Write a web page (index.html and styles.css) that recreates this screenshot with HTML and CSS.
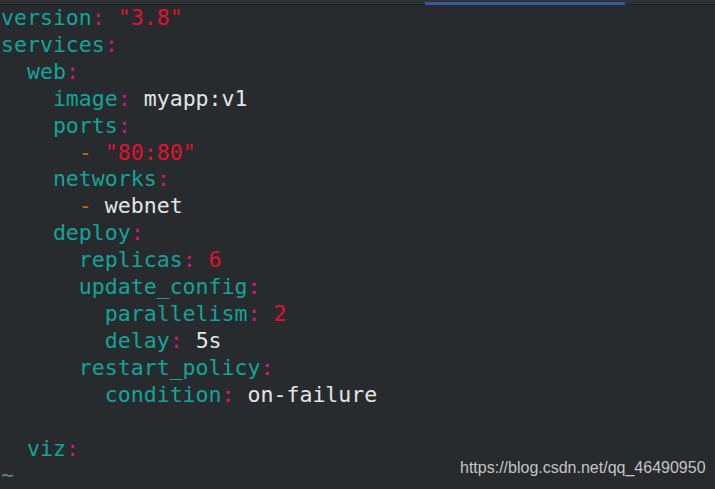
FILE: index.html
```html
<!DOCTYPE html>
<html>
<head>
<meta charset="utf-8">
<link rel="stylesheet" href="styles.css">
</head>
<body>
<div class="tabbar"><div class="tab-active"></div></div>
<pre class="code"><span class="k">version</span><span class="c">:</span> <span class="s">"3.8"</span>
<span class="k">services</span><span class="c">:</span>
  <span class="k">web</span><span class="c">:</span>
    <span class="k">image</span><span class="c">:</span> <span class="v">myapp:v1</span>
    <span class="k">ports</span><span class="c">:</span>
      <span class="d">-</span> <span class="s">"80:80"</span>
    <span class="k">networks</span><span class="c">:</span>
      <span class="d">-</span> <span class="v">webnet</span>
    <span class="k">deploy</span><span class="c">:</span>
      <span class="k">replicas</span><span class="c">:</span> <span class="s">6</span>
      <span class="k">update_config</span><span class="c">:</span>
        <span class="k">parallelism</span><span class="c">:</span> <span class="s">2</span>
        <span class="k">delay</span><span class="c">:</span> <span class="v">5s</span>
      <span class="k">restart_policy</span><span class="c">:</span>
        <span class="k">condition</span><span class="c">:</span> <span class="v">on-failure</span>

  <span class="k">viz</span><span class="c">:</span>
<span class="t">~</span></pre>
<div class="watermark">https://blog.csdn.net/qq_46490950</div>
</body>
</html>
```
FILE: styles.css
```css
html, body {
  margin: 0;
  padding: 0;
  width: 715px;
  height: 489px;
  overflow: hidden;
  background: #272b2e;
}
body {
  position: relative;
}
.tabbar {
  height: 4px;
  background: #2e3235;
  border-bottom: 1px solid #1f2224;
  position: relative;
}
.tab-active {
  position: absolute;
  left: 425px;
  top: 2px;
  width: 200px;
  height: 3px;
  background: #3a55a5;
}
.code {
  margin: 0;
  padding: 0 0 0 1px;
  font-family: "DejaVu Sans Mono", monospace;
  font-size: 21.55px;
  line-height: 26.9px;
  color: #e6e6e6;
}
.k { color: #14a399; }
.c { color: #d6157c; }
.s { color: #e3112f; }
.d { color: #c76a0c; }
.v { color: #e4e4e4; }
.t { color: #6d8080; }
.watermark {
  position: absolute;
  left: 460px;
  top: 459px;
  font-family: "Liberation Sans", Arial, sans-serif;
  font-size: 16px;
  color: #c4c4c4;
}
```
